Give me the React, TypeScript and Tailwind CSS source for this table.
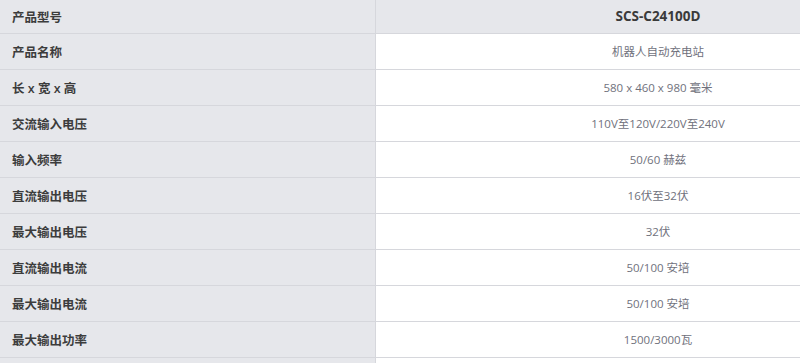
import React from "react";

const rows: [string, string][] = [
  ["产品名称", "机器人自动充电站"],
  ["长 x 宽 x 高", "580 x 460 x 980 毫米"],
  ["交流输入电压", "110V至120V/220V至240V"],
  ["输入频率", "50/60 赫兹"],
  ["直流输出电压", "16伏至32伏"],
  ["最大输出电压", "32伏"],
  ["直流输出电流", "50/100 安培"],
  ["最大输出电流", "50/100 安培"],
  ["最大输出功率", "1500/3000瓦"],
  ["", ""],
];

export default function App() {
  return (
    <div
      className="w-[800px] h-[363px] overflow-hidden bg-white"
      style={{ fontFamily: '"Open Sans", "Noto Sans CJK SC", sans-serif' }}
    >
      <div className="w-[940px]">
        <div className="flex h-[34px] border-b border-[#d6d7dc] bg-[#e6e7eb]">
          <div className="w-[376px] shrink-0 border-r border-[#d6d7dc] flex items-center pl-[12px] pt-[3px] text-[12.5px] font-semibold text-[#3c3c3c]">
            产品型号
          </div>
          <div className="flex-1 flex items-center justify-center text-[13.5px] font-bold text-[#3a3a3a]">
            SCS-C24100D
          </div>
        </div>
        {rows.map(([k, v], i) => (
          <div key={i} className="flex h-[36px] border-b border-[#d6d7dc]">
            <div className="w-[376px] shrink-0 bg-[#e6e7eb] border-r border-[#d6d7dc] flex items-center pl-[12px] pt-[3px] text-[12.5px] font-semibold text-[#3c3c3c]">
              {k}
            </div>
            <div className="flex-1 flex items-center justify-center text-[11.5px] text-[#70717c]">
              {v}
            </div>
          </div>
        ))}
      </div>
    </div>
  );
}
